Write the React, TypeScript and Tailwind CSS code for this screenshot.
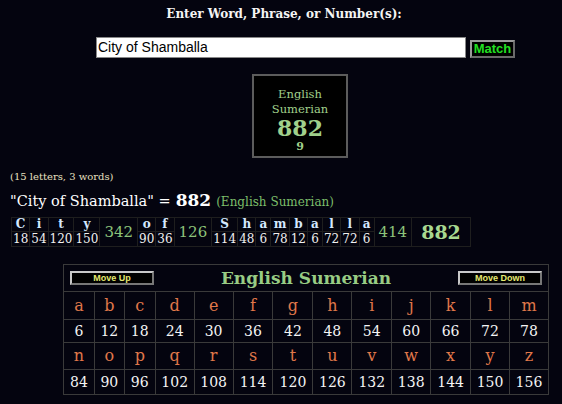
import React from 'react'

const serif = "font-['DejaVu_Serif','Liberation_Serif',serif]"
const sans = "font-['Liberation_Sans',Arial,sans-serif]"

type Part = { kind: 'letter'; ch: string; val: number } | { kind: 'sum'; val: number }

const parts: Part[] = [
  { kind: 'letter', ch: 'C', val: 18 },
  { kind: 'letter', ch: 'i', val: 54 },
  { kind: 'letter', ch: 't', val: 120 },
  { kind: 'letter', ch: 'y', val: 150 },
  { kind: 'sum', val: 342 },
  { kind: 'letter', ch: 'o', val: 90 },
  { kind: 'letter', ch: 'f', val: 36 },
  { kind: 'sum', val: 126 },
  { kind: 'letter', ch: 'S', val: 114 },
  { kind: 'letter', ch: 'h', val: 48 },
  { kind: 'letter', ch: 'a', val: 6 },
  { kind: 'letter', ch: 'm', val: 78 },
  { kind: 'letter', ch: 'b', val: 12 },
  { kind: 'letter', ch: 'a', val: 6 },
  { kind: 'letter', ch: 'l', val: 72 },
  { kind: 'letter', ch: 'l', val: 72 },
  { kind: 'letter', ch: 'a', val: 6 },
  { kind: 'sum', val: 414 }
]

const colWidths = [
  'w-[31px]', 'w-[30px]', 'w-[31px]', 'w-[39px]', 'w-[39px]', 'w-[40px]', 'w-[40px]',
  'w-[39px]', 'w-[40px]', 'w-[39px]', 'w-[40px]', 'w-[39px]', 'w-[39px]'
]

const alphabet = 'abcdefghijklmnopqrstuvwxyz'.split('')

function Breakdown() {
  return (
    <table className={`ml-[11px] mt-[6px] border-collapse ${serif}`}>
      <tbody>
        <tr>
          {parts.map((p, i) =>
            p.kind === 'letter' ? (
              <td
                key={i}
                className="h-[14px] min-w-[15px] border border-[#1e1e1e] px-[1px] text-center align-bottom text-[12px] font-bold leading-[13px] text-[#d4e8ff]"
              >
                {p.ch}
              </td>
            ) : (
              <td
                key={i}
                rowSpan={2}
                className="border border-[#1e1e1e] px-[4px] text-center align-middle text-[15px] leading-none text-[#8cc27a]"
              >
                {p.val}
              </td>
            )
          )}
          <td
            rowSpan={2}
            className="border border-[#1e1e1e] px-[9px] text-center align-middle text-[19px] font-bold leading-none text-[#a8d890]"
          >
            882
          </td>
        </tr>
        <tr>
          {parts.map((p, i) =>
            p.kind === 'letter' ? (
              <td
                key={i}
                className="h-[15px] border border-[#1e1e1e] px-[1px] text-center text-[12px] leading-[14px] text-[#f0f0f0]"
              >
                {p.val}
              </td>
            ) : null
          )}
        </tr>
      </tbody>
    </table>
  )
}

function SmallButton({ label }: { label: string }) {
  return (
    <button
      type="button"
      className={`h-[14px] w-[84px] border-2 border-t-[#c8c8c8] border-l-[#c8c8c8] border-b-[#777] border-r-[#777] bg-black text-[9px] font-bold leading-[10px] text-[#e4e870] ${sans}`}
    >
      {label}
    </button>
  )
}

function Chart() {
  const rows = [alphabet.slice(0, 13), alphabet.slice(13)]
  return (
    <table className={`ml-[63px] mt-[17px] w-[486px] border-collapse border border-[#3a3a3a] ${serif}`}>
      <colgroup>
        {colWidths.map((w, i) => (
          <col key={i} className={w} />
        ))}
      </colgroup>
      <tbody>
        <tr>
          <td colSpan={13} className="h-[27px] border border-[#3a3a3a] px-[6px]">
            <div className="flex items-center justify-between">
              <SmallButton label="Move Up" />
              <span className="text-[17px] font-bold leading-none text-[#98cc84]">English Sumerian</span>
              <SmallButton label="Move Down" />
            </div>
          </td>
        </tr>
        {rows.map((row, r) => (
          <React.Fragment key={r}>
            <tr>
              {row.map((ch) => (
                <td
                  key={ch}
                  className={`${r === 0 ? 'h-[28px]' : 'h-[27px]'} border border-[#3a3a3a] text-center text-[16px] leading-none text-[#e0784a]`}
                >
                  {ch}
                </td>
              ))}
            </tr>
            <tr>
              {row.map((ch) => (
                <td
                  key={ch}
                  className={`${r === 0 ? 'h-[23px]' : 'h-[25px]'} border border-[#3a3a3a] text-center text-[14px] leading-none text-[#f4f4f4]`}
                >
                  {(ch.charCodeAt(0) - 96) * 6}
                </td>
              ))}
            </tr>
          </React.Fragment>
        ))}
      </tbody>
    </table>
  )
}

export default function App() {
  return (
    <div className="min-h-[404px] w-[562px] overflow-hidden bg-[#04040f] pt-[6px]">
      <h1 className={`ml-[6px] text-center text-[12px] font-bold leading-[16px] text-[#f4f4f4] ${serif}`}>
        Enter Word, Phrase, or Number(s):
      </h1>
      <div className="ml-[96px] mt-[15px] flex items-center gap-[4px]">
        <input
          type="text"
          defaultValue="City of Shamballa"
          className={`h-[21px] w-[370px] border border-[#888] bg-white px-[1px] text-[14px] text-black outline-none ${sans}`}
        />
        <button
          type="button"
          className={`mt-[2px] h-[18px] w-[45px] border-2 border-t-[#9a9a9a] border-l-[#9a9a9a] border-b-[#6a6a6a] border-r-[#6a6a6a] bg-black text-[13px] font-bold leading-[13px] text-[#22e022] ${sans}`}
        >
          Match
        </button>
      </div>
      <div
        className={`ml-[252px] mt-[16px] flex h-[84px] w-[96px] flex-col items-center border-2 border-[#5c5c5c] bg-black pt-[10px] text-[#a0d08c] ${serif}`}
      >
        <span className="text-[11.5px] leading-[16px]">English</span>
        <span className="text-[11.5px] leading-[14px]">Sumerian</span>
        <span className="text-[22px] font-bold leading-[24px]">882</span>
        <span className="text-[11px] font-bold leading-[14px]">9</span>
      </div>
      <div className={`ml-[10px] mt-[12px] text-[10px] leading-[13px] text-[#e8e0c0] ${serif}`}>
        (15 letters, 3 words)
      </div>
      <div className={`ml-[10px] mt-[8px] flex items-baseline gap-[5px] leading-[18px] ${serif}`}>
        <span className="text-[14.5px] text-white">"City of Shamballa" =</span>
        <span className="text-[17px] font-bold text-white">882</span>
        <span className="text-[12px] text-[#7cbe6a]">(English Sumerian)</span>
      </div>
      <Breakdown />
      <Chart />
    </div>
  )
}
